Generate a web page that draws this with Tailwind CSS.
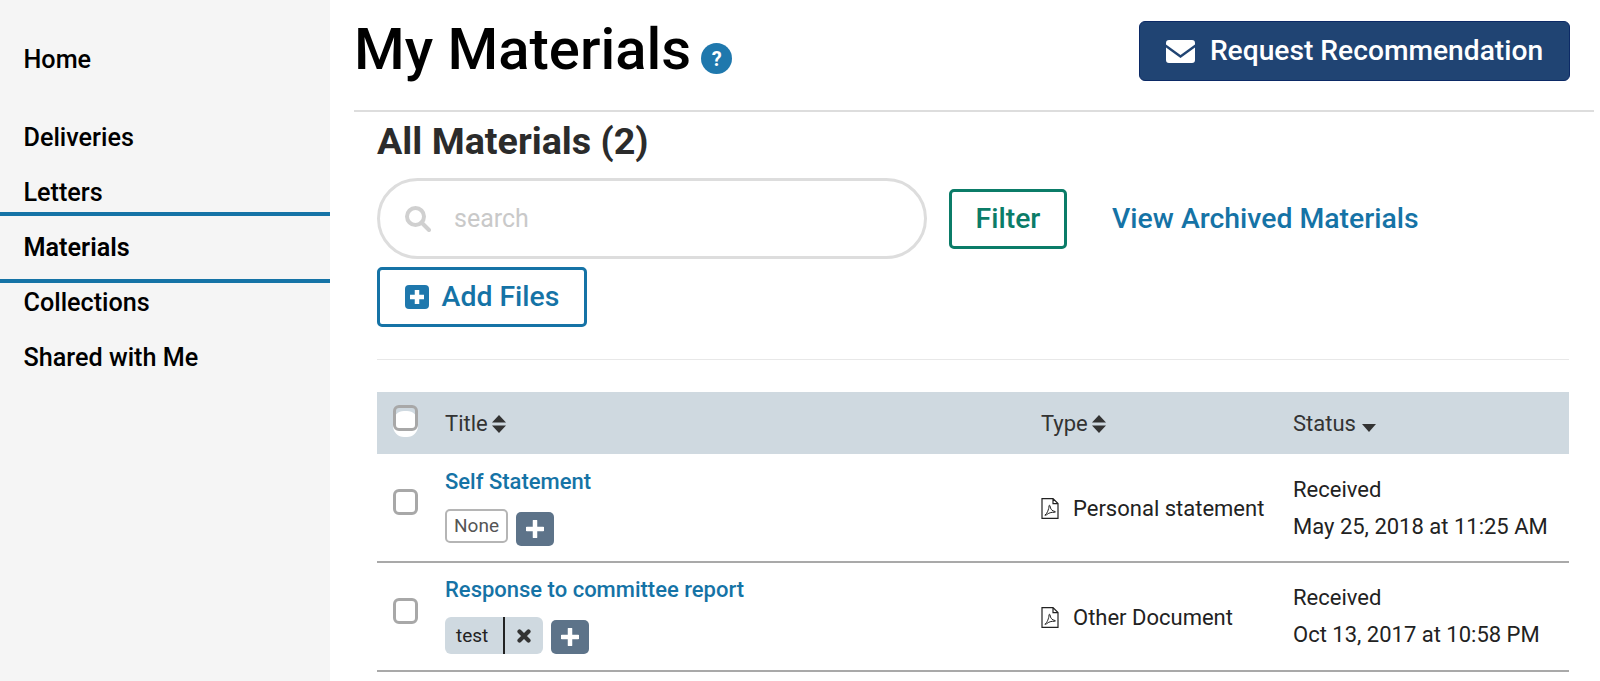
<!DOCTYPE html>
<html>
<head>
<meta charset="utf-8">
<script src="https://cdn.jsdelivr.net/npm/@tailwindcss/browser@4"></script>
</head>
<body class="font-['Roboto',sans-serif] bg-white overflow-hidden">
<div class="flex w-[1600px] h-[681px] overflow-hidden">
  <aside class="w-[330px] shrink-0 bg-[#f5f5f5] text-black text-[25.2px] font-medium">
    <div class="h-[32px]"></div>
    <a class="flex items-center h-[55px] pl-[23.5px]">Home</a>
    <div class="h-[23px]"></div>
    <a class="flex items-center h-[55px] pl-[23.5px]">Deliveries</a>
    <a class="flex items-center h-[47px] pt-[8px] pl-[23.5px]">Letters</a>
    <a class="flex items-center h-[71px] pl-[23.5px] border-y-[4px] border-[#1573a6] font-semibold">Materials</a>
    <a class="flex items-center h-[40px] pl-[23.5px]">Collections</a>
    <a class="flex items-center h-[55px] pl-[23.5px] mt-[7px]">Shared with Me</a>
  </aside>
  <main class="flex-1 pl-6 pr-[6px]">
    <header class="h-[112px] border-b-2 border-[#dddddd] flex items-start justify-between pr-[24px]">
      <div class="flex items-center mt-[14px]">
        <h1 class="text-[58px] leading-[70px] font-medium text-black">My Materials</h1>
        <span class="ml-[10px] mt-[19px] w-[31px] h-[31px] rounded-full bg-[#1f78ad] text-white text-[20px] font-bold flex items-center justify-center">?</span>
      </div>
      <button class="mt-[21px] w-[431px] h-[60px] rounded-[6px] bg-[#204473] border border-[#0c2a66] text-white text-[28.2px] font-medium flex items-center justify-center gap-[15px]">
        <svg class="w-[29px] h-[23px]" viewBox="0 0 29 23"><path fill="#fff" d="M3 0h23a3 3 0 0 1 3 3v1.500L14.500 15 0 4.500V3a3 3 0 0 1 3-3zM0 7.500l14.500 10.500L29 7.500V20a3 3 0 0 1-3 3H3a3 3 0 0 1-3-3z"/></svg>
        Request Recommendation
      </button>
    </header>
    <section class="pl-[23px] pr-[25px]">
      <h2 class="h-[66px] pt-[7px] text-[37.7px] leading-[44px] font-bold text-[#2b2b2b]">All Materials (2)</h2>
      <div class="flex items-center h-[81px]">
        <div class="w-[550px] h-[81px] rounded-full border-[3px] border-[#dddddd] flex items-center pl-[24px] text-[25px] text-[#c9c9c9]">
          <svg class="w-[27px] h-[27px] mr-[23px]" viewBox="0 0 27 27" fill="none" stroke="#d0d0d0" stroke-width="4"><circle cx="11.500" cy="11.500" r="8.500"/><path d="M17.500 17.500L25 25" stroke-linecap="round"/></svg>
          <span class="mt-[1px]">search</span>
        </div>
        <button class="ml-[22px] w-[118px] h-[60px] pt-[1px] rounded-[5px] border-[3px] border-[#0b7c68] text-[#0b7c68] text-[28.4px] font-medium">Filter</button>
        <a class="ml-[45px] mt-[1px] text-[28.4px] font-medium text-[#1573a6]">View Archived Materials</a>
      </div>
      <button class="mt-[8px] w-[210px] h-[60px] rounded-[5px] border-[3px] border-[#1573a6] text-[#1573a6] text-[28.4px] font-medium flex items-center justify-center gap-[13px]">
        <svg class="w-[24px] h-[24px]" viewBox="0 0 24 24"><rect width="24" height="24" rx="4" fill="#1f78ad"/><path d="M12 5v14M5 12h14" stroke="#fff" stroke-width="4.500"/></svg>
        Add Files
      </button>
      <div class="mt-[32px] border-t border-[#e8e8e8]"></div>
      <div class="mt-[32px] grid grid-cols-[68px_596px_252px_1fr] text-[22px] text-[#222222]">
        <div class="col-span-4 grid grid-cols-subgrid h-[62px] bg-[#cfd9e0] items-center text-[#333333]">
          <div class="pl-[16px]"><span class="relative block w-[25px] h-[26px] -mt-[10px]"><span class="absolute left-0 right-0 top-[6px] h-[26px] rounded-[11px] bg-white"></span><span class="absolute inset-0 rounded-[6px] border-[3px] border-[#a8a8a8]"></span></span></div>
          <div class="flex items-center gap-[4px] pt-[1px]">Title
            <svg class="w-[14px] h-[18px]" viewBox="0 0 14 18" fill="#333"><path d="M7 0l7 7.500H0zM7 18l7-7.500H0z"/></svg></div>
          <div class="flex items-center gap-[4px] pt-[1px]">Type
            <svg class="w-[14px] h-[18px]" viewBox="0 0 14 18" fill="#333"><path d="M7 0l7 7.500H0zM7 18l7-7.500H0z"/></svg></div>
          <div class="flex items-center gap-[6px] pt-[1px]">Status
            <svg class="w-[14px] h-[8px] mt-[9px]" viewBox="0 0 14 8" fill="#333"><path d="M7 8l7-8H0z"/></svg></div>
        </div>

        <div class="col-span-4 grid grid-cols-subgrid h-[109px] border-b-2 border-[#a9a9a9] items-center">
          <div class="pl-[16px] pb-[11px]"><span class="block w-[25px] h-[26px] rounded-[6px] border-[3px] border-[#a8a8a8]"></span></div>
          <div class="self-start pt-[14px]">
            <a class="block h-[28px] leading-[28px] text-[#1573a6] font-medium">Self Statement</a>
            <div class="flex items-end gap-[8px] mt-[13px]">
              <span class="w-[63px] h-[34px] rounded-[5px] border-2 border-[#b5b5b5] text-[19px] flex items-center justify-center text-[#555555] mb-[3px]">None</span>
              <button class="w-[38px] h-[34px] rounded-[5px] bg-[#5d7389] flex items-center justify-center"><svg class="w-[18px] h-[18px]" viewBox="0 0 18 18"><path d="M9 1v16M1 9h16" stroke="#fff" stroke-width="4.500" stroke-linecap="round"/></svg></button>
            </div>
          </div>
          <div class="flex items-center gap-[14px] pt-[1px]">
            <svg class="w-[18px] h-[21px]" viewBox="0 0 18 21" fill="none" stroke="#222" stroke-width="1.200"><path d="M1 .600h11l5 5V20.400H1zM12 .600v5h5"/><path d="M4 17c2-1 4-6 4-9 0-1 .8-1 1 0 .3 3 2 5 5 5.500.8.200.5 1-.5.800-3-.300-6 .700-8 2.500-1 .800-2 .600-1.500.200z" stroke-width="1"/></svg>
            Personal statement
          </div>
          <div class="self-start pt-[17px] leading-[37px]"><div>Received</div><div>May 25, 2018 at 11:25 AM</div></div>
        </div>

        <div class="col-span-4 grid grid-cols-subgrid h-[109px] border-b-2 border-[#a9a9a9] items-center">
          <div class="pl-[16px] pb-[11px]"><span class="block w-[25px] h-[26px] rounded-[6px] border-[3px] border-[#a8a8a8]"></span></div>
          <div class="self-start pt-[13px]">
            <a class="block h-[28px] leading-[28px] text-[#1573a6] font-medium">Response to committee report</a>
            <div class="flex items-end gap-[8px] mt-[13px]">
              <span class="w-[98px] h-[37px] rounded-[6px] bg-[#cfd9e0] text-[19px] flex items-stretch text-[#222222]"><span class="w-[60px] pl-[11px] pt-[1px] flex items-center border-r-2 border-[#222222]">test</span><span class="flex-1 flex items-center justify-center"><svg class="w-[14px] h-[14px]" viewBox="0 0 14 14"><path d="M2.500 2.500l9 9M11.500 2.500l-9 9" stroke="#333" stroke-width="4.200" stroke-linecap="round"/></svg></span></span>
              <button class="w-[38px] h-[34px] rounded-[5px] bg-[#5d7389] flex items-center justify-center"><svg class="w-[18px] h-[18px]" viewBox="0 0 18 18"><path d="M9 1v16M1 9h16" stroke="#fff" stroke-width="4.500" stroke-linecap="round"/></svg></button>
            </div>
          </div>
          <div class="flex items-center gap-[14px] pt-[1px]">
            <svg class="w-[18px] h-[21px]" viewBox="0 0 18 21" fill="none" stroke="#222" stroke-width="1.200"><path d="M1 .600h11l5 5V20.400H1zM12 .600v5h5"/><path d="M4 17c2-1 4-6 4-9 0-1 .8-1 1 0 .3 3 2 5 5 5.500.8.200.5 1-.5.800-3-.300-6 .700-8 2.500-1 .800-2 .600-1.500.200z" stroke-width="1"/></svg>
            Other Document
          </div>
          <div class="self-start pt-[16px] leading-[37px]"><div>Received</div><div>Oct 13, 2017 at 10:58 PM</div></div>
        </div>
      </div>
    </section>
  </main>
</div>
</body>
</html>
